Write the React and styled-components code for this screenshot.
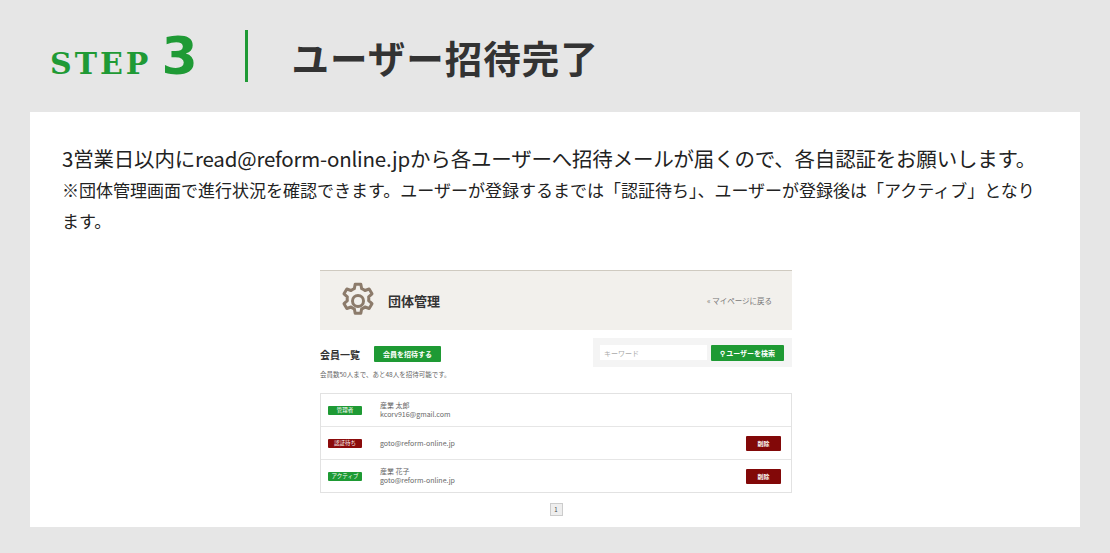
import React from "react";
import styled, { createGlobalStyle } from "styled-components";

const Global = createGlobalStyle`
  html, body { margin: 0; padding: 0; background: #e6e6e6; }
  body { font-family: "Noto Sans CJK JP", "Noto Sans", sans-serif; color: #333; }
`;

const Page = styled.div`
  width: 1110px; height: 553px; box-sizing: border-box;
  padding: 28px 30px 26px; display: flex; flex-direction: column;
`;
const Header = styled.div`
  display: flex; align-items: center; height: 56px; padding-left: 20px; margin-bottom: 28px;
`;
const Step = styled.div`
  display: flex; align-items: baseline; gap: 10px; color: #1f9a35;
  font-family: "DejaVu Serif", serif; font-weight: 900;
`;
const StepWord = styled.span` font-size: 30px; letter-spacing: 3px; `;
const StepNum = styled.span` font-family: "DejaVu Sans", sans-serif; font-weight: 900; font-size: 52px; line-height: 1; `;
const Divider = styled.div` width: 3px; height: 52px; background: #1f9a35; margin: 0 44px 0 47px; `;
const Title = styled.h1` margin: 0; font-size: 37.5px; font-weight: 700; color: #333; letter-spacing: 1px; `;

const Card = styled.div`
  flex: 1; background: #fff; padding: 30px 30px 0 32px; display: flex; flex-direction: column;
`;
const Lead = styled.p` margin: 0; font-size: 20.5px; line-height: 32px; color: #222; letter-spacing: -0.2px; `;
const Note = styled.p` margin: 0; font-size: 17px; line-height: 31px; color: #222; `;

const Shot = styled.div`
  width: 472px; margin: 34px auto 0; font-family: "Noto Sans CJK JP", sans-serif; color: #444;
`;
const ShotHead = styled.div`
  height: 60px; background: #f2f0ec; border-top: 1px solid #cfcac0;
  display: flex; align-items: center; padding: 0 20px 0 18px; box-sizing: border-box;
`;
const ShotTitle = styled.div` font-size: 13px; font-weight: 700; margin-left: 10px; flex: 1; color: #333; `;
const Back = styled.div` font-size: 7.5px; color: #777; `;
const Bar = styled.div` display: flex; justify-content: space-between; margin-top: 16px; `;
const BarLeft = styled.div` display: flex; flex-direction: column; `;
const Row = styled.div` display: flex; align-items: center; gap: 14px; `;
const ListTitle = styled.div` font-size: 10px; font-weight: 700; color: #333; `;
const GreenBtn = styled.div`
  background: #1e9a34; color: #fff; font-size: 7px; font-weight: 700;
  padding: 0 9px; height: 16px; display: flex; align-items: center; gap: 3px; border-radius: 1px;
`;
const Small = styled.div` font-size: 6.5px; color: #666; margin-top: 7px; `;
const SearchBox = styled.div`
  background: #f4f4f4; width: 199px; height: 29px; box-sizing: border-box;
  display: flex; align-items: center; padding: 0 8px 0 7px; gap: 4px; margin-top: -8px;
`;
const Input = styled.div`
  flex: 1; height: 15px; background: #fff; font-size: 7px; color: #aaa;
  display: flex; align-items: center; padding-left: 4px;
`;
const Table = styled.div` border: 1px solid #e2e2e2; margin-top: 14px; `;
const TRow = styled.div`
  height: 32px; display: flex; align-items: center; padding: 0 10px 0 7px;
  & + & { border-top: 1px solid #e6e6e6; }
`;
const Badge = styled.div`
  width: 34px; height: 9px; background: ${p => p.$red ? "#8b0b0b" : "#1e9a34"};
  color: #fff; font-size: 5.5px; display: flex; align-items: center; justify-content: center;
  border-radius: 1px;
`;
const Info = styled.div` flex: 1; margin-left: 18px; font-size: 7px; line-height: 9px; color: #666; `;
const Del = styled.div`
  width: 35px; height: 15px; background: #820808; color: #fff; font-size: 6px; font-weight: 700;
  display: flex; align-items: center; justify-content: center; border-radius: 1px;
`;
const Pager = styled.div`
  margin: 10px auto 0; width: 13px; height: 13px; border: 1px solid #ccc; background: #eee;
  font-size: 6px; display: flex; align-items: center; justify-content: center; box-sizing: border-box;
`;

const Gear = () => (
  <svg width="40" height="40" viewBox="0 0 24 24" fill="none" stroke="#8c7b6b" strokeWidth="1.8" strokeLinejoin="round">
    <path d="M10.3 2h3.4l.5 2.6a8 8 0 0 1 2 1.1l2.5-.9 1.7 2.9-2 1.8a8 8 0 0 1 0 2.3l2 1.8-1.7 2.9-2.5-.9a8 8 0 0 1-2 1.1l-.5 2.6h-3.4l-.5-2.6a8 8 0 0 1-2-1.1l-2.5.9-1.7-2.9 2-1.8a8 8 0 0 1 0-2.3l-2-1.8 1.7-2.9 2.5.9a8 8 0 0 1 2-1.1z"/>
    <circle cx="12" cy="12" r="3.3"/>
  </svg>
);

export default function App() {
  return (
    <Page>
      <Global />
      <Header>
        <Step><StepWord>STEP</StepWord><StepNum>3</StepNum></Step>
        <Divider />
        <Title>ユーザー招待完了</Title>
      </Header>
      <Card>
        <Lead>3営業日以内にread@reform-online.jpから各ユーザーへ招待メールが届くので、各自認証をお願いします。</Lead>
        <Note>※団体管理画面で進行状況を確認できます。ユーザーが登録するまでは「認証待ち」、ユーザーが登録後は「アクティブ」となります。</Note>
        <Shot>
          <ShotHead>
            <Gear />
            <ShotTitle>団体管理</ShotTitle>
            <Back>« マイページに戻る</Back>
          </ShotHead>
          <Bar>
            <BarLeft>
              <Row><ListTitle>会員一覧</ListTitle><GreenBtn>会員を招待する</GreenBtn></Row>
              <Small>会員数50人まで、あと48人を招待可能です。</Small>
            </BarLeft>
            <SearchBox>
              <Input>キーワード</Input>
              <GreenBtn>⚲ ユーザーを検索</GreenBtn>
            </SearchBox>
          </Bar>
          <Table>
            <TRow><Badge>管理者</Badge><Info>産業 太郎<br />kcorv916@gmail.com</Info></TRow>
            <TRow><Badge $red>認証待ち</Badge><Info>goto@reform-online.jp</Info><Del>削除</Del></TRow>
            <TRow><Badge>アクティブ</Badge><Info>産業 花子<br />goto@reform-online.jp</Info><Del>削除</Del></TRow>
          </Table>
          <Pager>1</Pager>
        </Shot>
      </Card>
    </Page>
  );
}
